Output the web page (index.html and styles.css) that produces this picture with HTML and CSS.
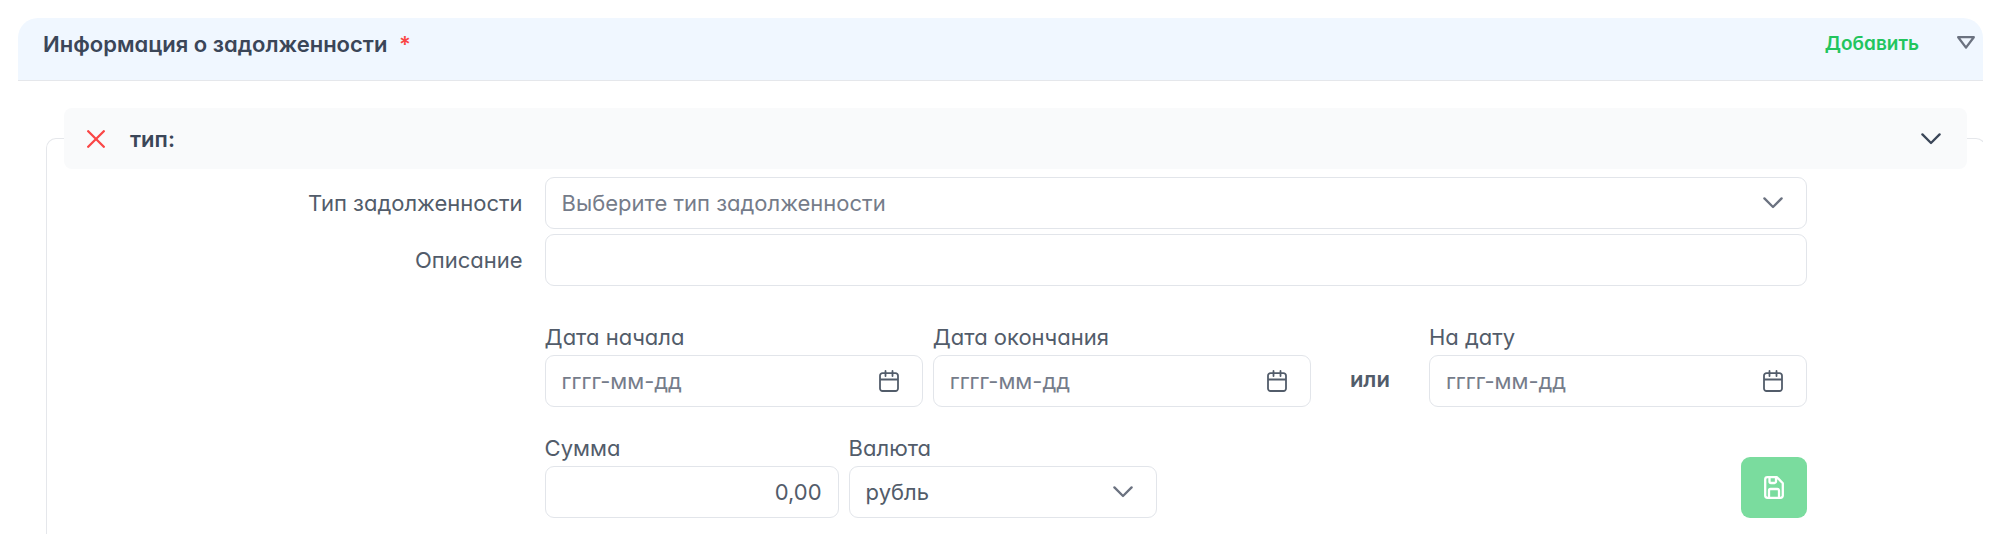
FILE: index.html
```html
<!DOCTYPE html>
<html lang="ru">
<head>
  <meta charset="UTF-8">
  <meta name="viewport" content="width=device-width, initial-scale=1">
  <title>Информация о задолженности</title>
  <link rel="stylesheet" href="styles.css">
</head>
<body>
  <section class="panel">
    <header class="panel-header">
      <h2 class="panel-title">Информация о задолженности <span class="required">*</span></h2>
      <button type="button" class="btn-add">Добавить</button>
      <button type="button" class="btn-icon btn-collapse" aria-label="Свернуть">
        <svg width="18" height="13" viewBox="0 0 18 13"><path d="M1.2 1.2h15.6L9 11.6z"/></svg>
      </button>
    </header>

    <fieldset class="debt">
      <legend class="debt-legend">
        <button type="button" class="btn-icon btn-remove" aria-label="Удалить">
          <svg width="18" height="18" viewBox="0 0 18 18"><path d="M1.2 1.2l15.6 15.6M16.8 1.2L1.2 16.8"/></svg>
        </button>
        <span class="debt-name">тип:</span>
        <button type="button" class="btn-icon btn-toggle" aria-label="Показать">
          <svg width="20" height="12" viewBox="0 0 20 12"><path d="M1.4 1.4L10 10l8.6-8.6"/></svg>
        </button>
      </legend>

      <form class="debt-form">
        <label class="label-side" for="debt-type">Тип задолженности</label>
        <div class="select">
          <select id="debt-type" class="control placeholder">
            <option>Выберите тип задолженности</option>
          </select>
          <svg class="chevron" width="20" height="12" viewBox="0 0 20 12"><path d="M1.4 1.4L10 10l8.6-8.6"/></svg>
        </div>

        <label class="label-side" for="descr">Описание</label>
        <input id="descr" class="control" type="text">

        <div class="dates">
          <div class="field">
            <label for="date-start">Дата начала</label>
            <div class="control date">
              <input id="date-start" type="text" placeholder="гггг-мм-дд">
              <button type="button" class="btn-icon" aria-label="Календарь">
                <svg width="20" height="22" viewBox="0 0 20 22"><path d="M3.5 3.2h13a2.5 2.5 0 0 1 2.5 2.5v12.8a2.5 2.5 0 0 1-2.5 2.5h-13A2.5 2.5 0 0 1 1 18.5V5.7a2.5 2.5 0 0 1 2.5-2.5zM1 9.5h18M6.5 1v5M13.5 1v5"/></svg>
              </button>
            </div>
          </div>
          <div class="field">
            <label for="date-end">Дата окончания</label>
            <div class="control date">
              <input id="date-end" type="text" placeholder="гггг-мм-дд">
              <button type="button" class="btn-icon" aria-label="Календарь">
                <svg width="20" height="22" viewBox="0 0 20 22"><path d="M3.5 3.2h13a2.5 2.5 0 0 1 2.5 2.5v12.8a2.5 2.5 0 0 1-2.5 2.5h-13A2.5 2.5 0 0 1 1 18.5V5.7a2.5 2.5 0 0 1 2.5-2.5zM1 9.5h18M6.5 1v5M13.5 1v5"/></svg>
              </button>
            </div>
          </div>
          <span class="or">или</span>
          <div class="field">
            <label for="date-on">На дату</label>
            <div class="control date">
              <input id="date-on" type="text" placeholder="гггг-мм-дд">
              <button type="button" class="btn-icon" aria-label="Календарь">
                <svg width="20" height="22" viewBox="0 0 20 22"><path d="M3.5 3.2h13a2.5 2.5 0 0 1 2.5 2.5v12.8a2.5 2.5 0 0 1-2.5 2.5h-13A2.5 2.5 0 0 1 1 18.5V5.7a2.5 2.5 0 0 1 2.5-2.5zM1 9.5h18M6.5 1v5M13.5 1v5"/></svg>
              </button>
            </div>
          </div>
        </div>

        <div class="money">
          <div class="field amount">
            <label for="amount">Сумма</label>
            <input id="amount" class="control" type="text" value="0,00">
          </div>
          <div class="field currency">
            <label for="currency">Валюта</label>
            <div class="select">
              <select id="currency" class="control">
                <option>рубль</option>
              </select>
              <svg class="chevron" width="20" height="12" viewBox="0 0 20 12"><path d="M1.4 1.4L10 10l8.6-8.6"/></svg>
            </div>
          </div>
          <button type="submit" class="btn-save" disabled aria-label="Сохранить">
            <svg width="20" height="23" viewBox="0 0 20 23"><path d="M3.5 1.2h9.5l5.8 6v12.3a2.2 2.2 0 0 1-2.2 2.3H3.5a2.3 2.3 0 0 1-2.3-2.3V3.5a2.3 2.3 0 0 1 2.3-2.3zM5.5 1.5v4a1.5 1.5 0 0 0 1.5 1.5h3.5a1.5 1.5 0 0 0 1.5-1.5v-4M5 21.5v-7a1.5 1.5 0 0 1 1.5-1.5h7a1.5 1.5 0 0 1 1.5 1.5v7"/></svg>
          </button>
        </div>
      </form>
    </fieldset>
  </section>
</body>
</html>
```
FILE: styles.css
```css
* {
  box-sizing: border-box;
}
body {
  margin: 0;
  padding: 18px 17px 0 18px;
  min-height: 100vh;
  display: flex;
  flex-direction: column;
  background: #fff;
  color: #525c6a;
  font-family: Inter, "Liberation Sans", sans-serif;
  font-feature-settings: "cv02", "cv03", "cv04", "cv11";
  font-size: 22px;
  line-height: 28px;
}
button, input, select {
  font: inherit;
  font-feature-settings: inherit;
  color: inherit;
}
svg {
  display: block;
  fill: none;
  stroke: currentColor;
  stroke-width: 2.3;
  stroke-linecap: round;
  stroke-linejoin: round;
}
.panel {
  flex: 1;
  display: flex;
  flex-direction: column;
  overflow: hidden;
}
.panel-header {
  display: flex;
  align-items: flex-start;
  padding: 12px 8px 22px 25px;
  background: #f0f7ff;
  border-bottom: 1px solid #e5e7eb;
  border-radius: 20px 20px 0 0;
}
.panel-title {
  flex: 1;
  margin: 0;
  color: #3b4658;
  font-size: 22px;
  font-weight: 600;
}
.required {
  margin-left: 6px;
  color: #fa4646;
}
.btn-icon {
  padding: 0;
  border: 0;
  background: none;
  cursor: pointer;
}
.btn-add {
  padding: 0;
  border: 0;
  background: none;
  color: #22c55e;
  font-size: 19px;
  font-weight: 600;
  cursor: pointer;
}
.btn-collapse {
  margin-left: 38px;
  padding-top: 6px;
  color: #6b7280;
}
.debt {
  flex: 1;
  min-width: 0;
  margin: 27px -3px 0 28px;
  padding: 0 18px 0 17px;
  border: 1px solid #e5e7eb;
  border-bottom: 0;
  border-radius: 10px 10px 0 0;
}
.debt-legend {
  display: flex;
  align-items: center;
  width: 100%;
  height: 61px;
  padding: 0 26px 0 23px;
  background: #f9fafb;
  border-radius: 8px;
  color: #3b4658;
  font-weight: 600;
}
.btn-remove {
  color: #fa4646;
}
.debt-name {
  flex: 1;
  margin-left: 25px;
}
.debt-form {
  display: grid;
  grid-template-columns: 24.1% 1fr 7.25%;
  gap: 5px 22px;
  padding-top: 8px;
}
.label-side {
  grid-column: 1;
  align-self: center;
  text-align: right;
}
.control {
  grid-column: 2;
  width: 100%;
  height: 52px;
  padding: 0 16px;
  background: #fff;
  border: 1px solid #e2e5ea;
  border-radius: 9px;
}
.select {
  display: grid;
  align-items: center;
}
.select .control {
  grid-area: 1 / 1;
  appearance: none;
}
.chevron {
  grid-area: 1 / 1;
  justify-self: end;
  margin-right: 24px;
  color: #6b7280;
  pointer-events: none;
}
.placeholder,
::placeholder {
  color: #757c8a;
  opacity: 1;
}
.dates {
  grid-column: 2;
  display: grid;
  grid-template-columns: 1fr 1fr 98px 1fr;
  gap: 10px;
  margin-top: 32px;
}
.field {
  display: flex;
  flex-direction: column;
  gap: 4px;
  min-width: 0;
}
.date {
  display: flex;
  align-items: center;
  padding-right: 23px;
}
.date svg {
  stroke-width: 1.8;
}
.date input {
  flex: 1;
  min-width: 0;
  padding: 0;
  border: 0;
  outline: none;
  background: none;
}
.or {
  align-self: end;
  padding-bottom: 14px;
  text-align: center;
  font-weight: 600;
}
.money {
  grid-column: 2;
  display: flex;
  align-items: flex-end;
  gap: 10px;
  margin-top: 22px;
}
.amount {
  flex: 0 1 294px;
}
.amount .control {
  text-align: right;
}
.currency {
  flex: 0 1 308px;
}
.btn-save {
  display: grid;
  place-items: center;
  width: 66px;
  height: 61px;
  margin-left: auto;
  padding: 0;
  border: 0;
  border-radius: 9px;
  background: #7adc9e;
  color: #fff;
}
```
